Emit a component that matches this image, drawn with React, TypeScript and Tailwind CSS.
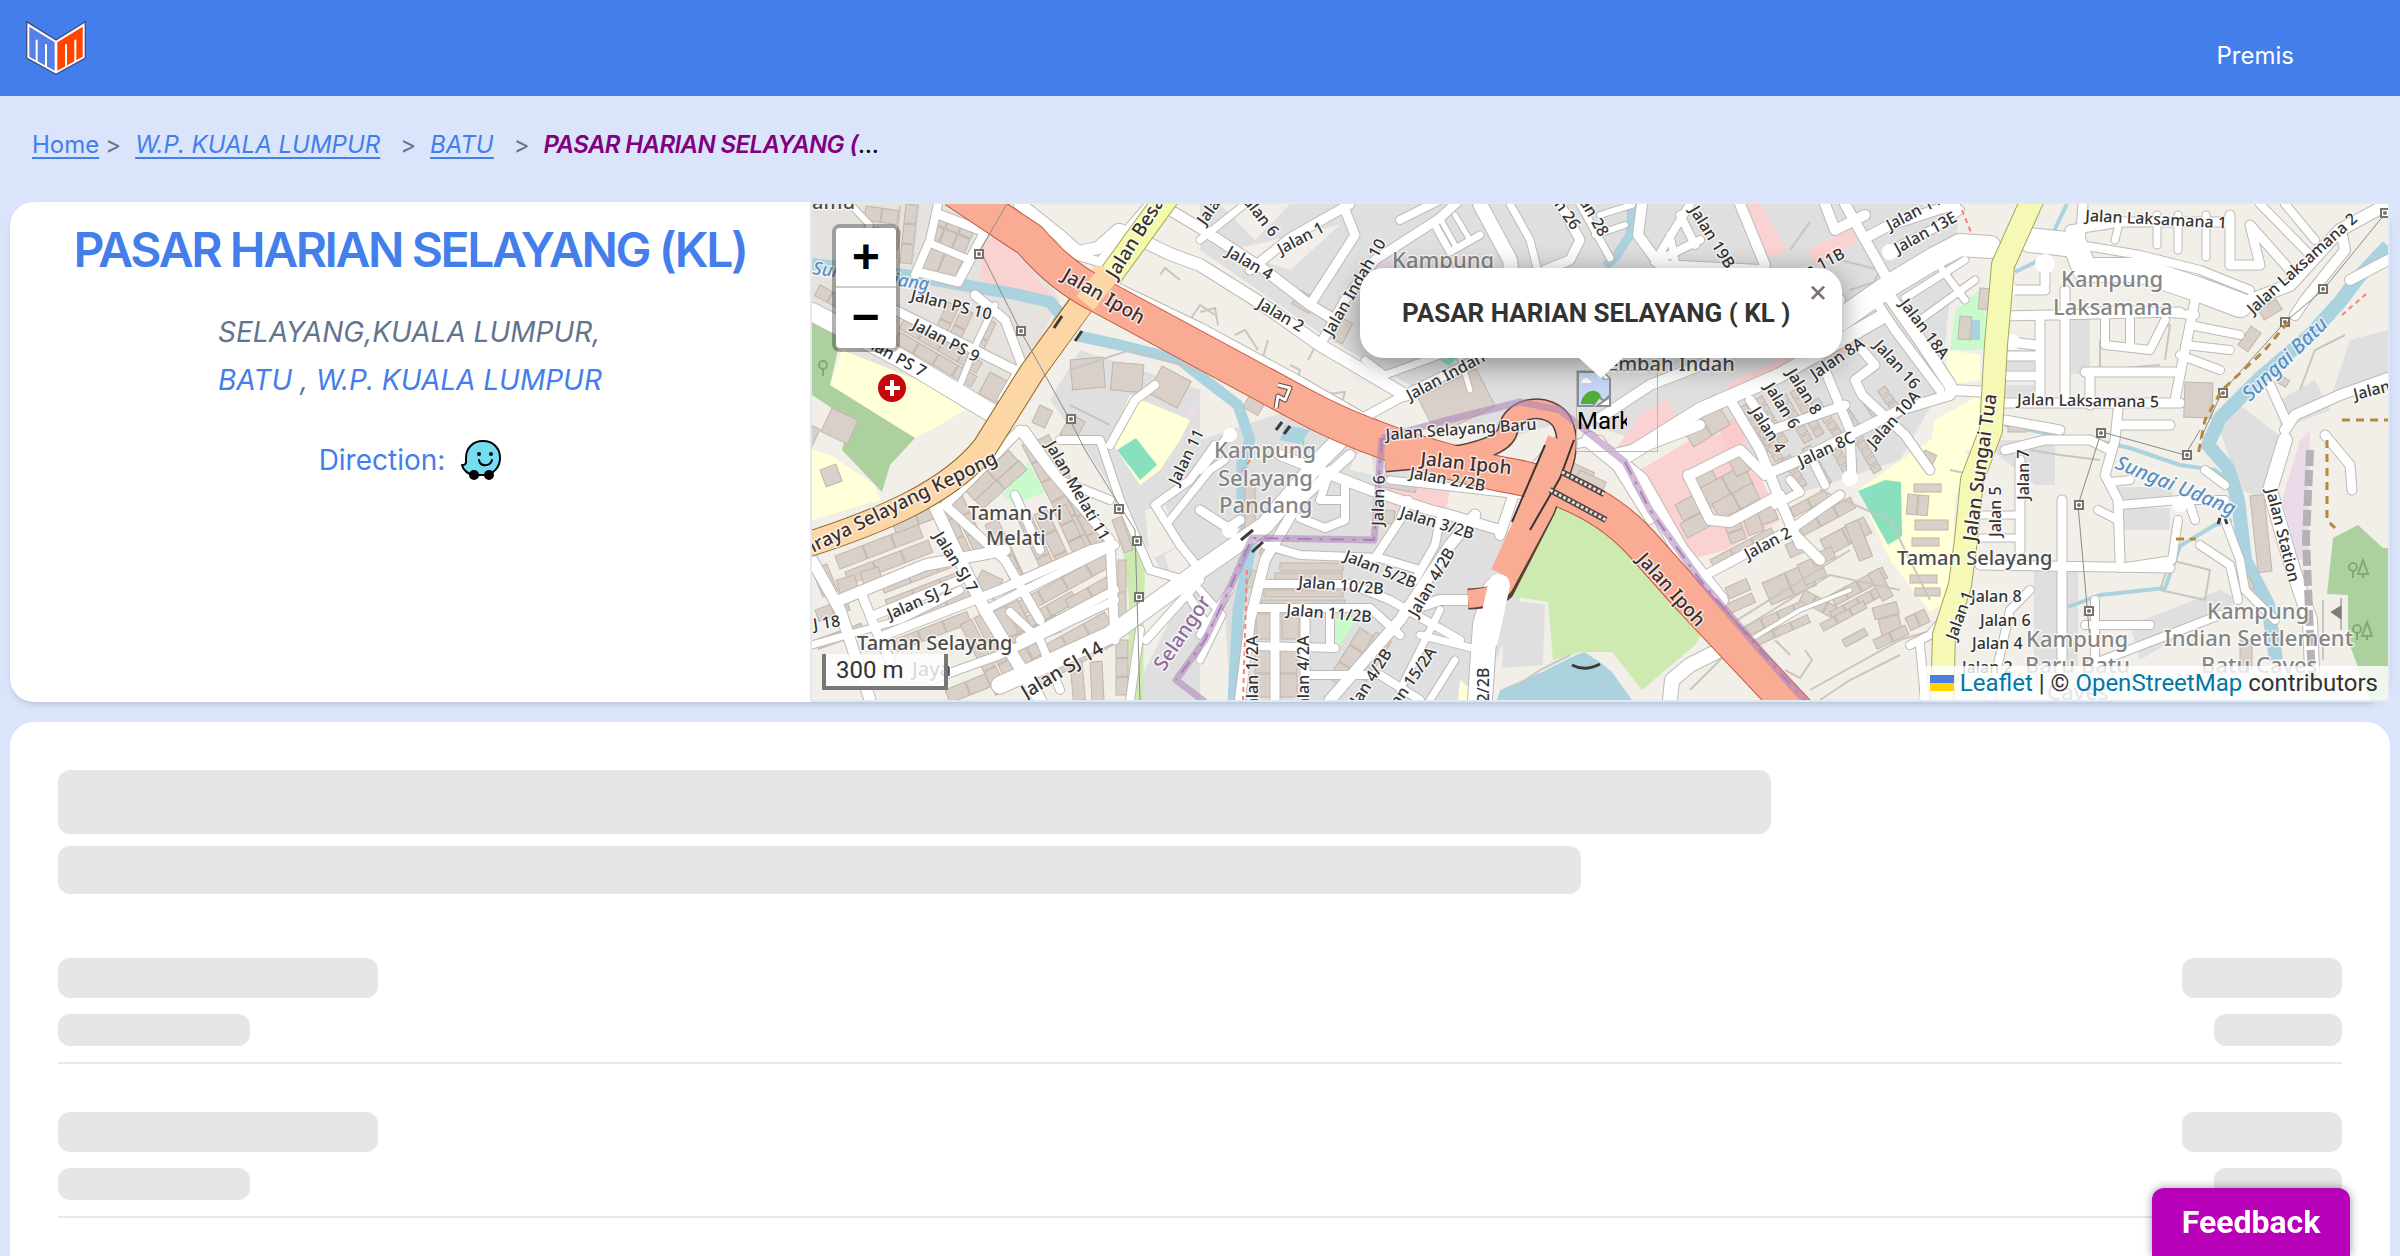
import React from 'react';

type Block = [number, number, number, number, number, number];
type Label = [string, number, number, number];

// x, y, width, height, angle, number of units in the row
const blocks: Block[] = [
  [866, 206, 34, 14, 8, 2], [864, 226, 38, 18, 8, 2], [906, 204, 12, 60, 6, 3],
  [938, 210, 42, 14, 22, 3], [932, 224, 42, 16, 22, 3], [928, 246, 38, 24, 22, 2],
  [820, 285, 30, 12, 28, 2], [905, 318, 90, 12, 30, 4], [900, 332, 90, 12, 30, 4], [895, 346, 80, 12, 30, 3],
  [948, 302, 12, 38, 25, 2], [962, 308, 12, 38, 25, 2], [985, 318, 12, 40, 25, 2], [990, 372, 26, 24, 28, 1],
  [832, 408, 30, 26, 25, 1], [820, 470, 18, 18, -20, 1],
  [1070, 360, 34, 30, -5, 1], [1113, 362, 32, 28, 5, 1], [1162, 366, 34, 30, 28, 1],
  [1040, 405, 14, 20, 25, 1], [1060, 434, 24, 16, -60, 1], [800, 420, 22, 30, 25, 1],
  [835, 556, 90, 14, -21, 3], [845, 572, 90, 13, -21, 3], [892, 522, 50, 12, -21, 2],
  [836, 580, 20, 20, -16, 1], [860, 572, 20, 20, -16, 1],
  [935, 505, 13, 60, -25, 3], [950, 500, 13, 60, -25, 3], [965, 490, 60, 14, -42, 2], [975, 500, 60, 12, -42, 2],
  [985, 525, 14, 66, -25, 3], [1001, 560, 13, 30, -25, 2], [1018, 520, 14, 66, -25, 3], [1034, 515, 14, 70, -25, 3],
  [1022, 445, 16, 130, -27, 6], [1038, 440, 12, 130, -27, 6], [1053, 510, 14, 54, -25, 3],
  [880, 582, 88, 12, -21, 3], [885, 600, 88, 12, -21, 3], [888, 617, 90, 14, -21, 3], [893, 640, 80, 12, -21, 3],
  [982, 570, 24, 22, 25, 1], [1014, 604, 110, 14, -29, 4], [1020, 620, 60, 12, -29, 2], [1065, 600, 52, 12, -29, 2],
  [1018, 660, 100, 14, -29, 4], [1025, 680, 100, 12, -29, 4],
  [960, 625, 13, 80, -27, 3], [974, 618, 13, 80, -27, 3], [993, 612, 13, 62, -27, 2], [1006, 606, 13, 60, -27, 2],
  [812, 570, 16, 30, -22, 1], [815, 610, 34, 12, -20, 2], [815, 640, 50, 10, -20, 2],
  [945, 690, 44, 14, -22, 2], [1070, 662, 12, 40, -5, 1], [1090, 662, 12, 40, -3, 1], [1116, 640, 12, 56, 0, 3],
  [1118, 560, 8, 66, 0, 2], [1112, 520, 10, 36, -20, 1],
  [1280, 563, 64, 8, 0, 1], [1275, 573, 68, 8, 0, 1], [1264, 590, 80, 7, 0, 1], [1262, 600, 84, 6, 0, 1],
  [1256, 614, 17, 26, 0, 1], [1282, 614, 17, 26, 0, 1], [1255, 650, 17, 48, 0, 2], [1280, 650, 17, 48, 0, 2],
  [1360, 628, 18, 60, 32, 3], [1376, 632, 18, 48, 32, 2], [1385, 475, 34, 12, 10, 1], [1385, 510, 10, 14, 5, 1],
  [1264, 545, 10, 10, 30, 1], [1252, 570, 8, 18, 20, 1], [1250, 395, 18, 14, 30, 1], [1245, 480, 10, 50, 0, 2],
  [1418, 398, 66, 42, -27, 1], [1342, 318, 12, 24, 27, 1], [1300, 290, 20, 16, 30, 1],
  [1550, 452, 50, 30, 25, 1], [1580, 470, 30, 26, 25, 1],
  [1675, 505, 30, 18, -28, 1], [1690, 478, 24, 18, -28, 1], [1700, 488, 50, 22, -28, 2], [1712, 504, 46, 18, -28, 2], [1728, 460, 16, 20, -28, 1],
  [1680, 524, 34, 16, -28, 1], [1724, 524, 16, 22, -20, 2], [1742, 516, 16, 22, -20, 1], [1756, 508, 18, 18, -20, 1],
  [1690, 410, 30, 16, -32, 1], [1680, 425, 44, 26, -32, 2], [1710, 560, 70, 12, -28, 3],
  [1790, 508, 40, 10, -28, 2], [1798, 525, 60, 12, -28, 3], [1820, 540, 50, 18, -28, 2], [1845, 525, 14, 40, -22, 1],
  [1762, 583, 50, 24, -24, 2], [1797, 565, 24, 22, -24, 1], [1785, 545, 20, 14, -24, 1], [1810, 556, 24, 12, -24, 1],
  [1725, 588, 24, 12, -24, 1], [1725, 605, 30, 10, -24, 1], [1745, 626, 70, 10, -24, 4], [1755, 638, 58, 8, -24, 3],
  [1805, 590, 40, 12, 28, 3], [1830, 595, 60, 12, -28, 4], [1830, 612, 60, 10, -28, 4], [1868, 574, 12, 32, -28, 1],
  [1820, 624, 50, 8, -28, 3], [1842, 640, 26, 8, -28, 1], [1872, 608, 26, 12, -15, 1], [1878, 620, 22, 22, -15, 1],
  [1873, 640, 36, 10, -25, 2], [1905, 618, 22, 14, -25, 2],
  [1914, 484, 28, 8, 0, 1], [1908, 494, 22, 20, 5, 2], [1915, 520, 34, 10, 0, 1], [1912, 538, 28, 8, 0, 1],
  [1910, 575, 28, 8, 0, 1], [1915, 588, 26, 8, 0, 1], [1925, 450, 14, 14, 25, 1], [1960, 316, 12, 24, 5, 1], [1980, 288, 10, 22, 5, 1],
  [2185, 382, 28, 36, 2, 1], [2258, 310, 22, 12, -32, 1], [2238, 345, 24, 12, -55, 1], [2280, 375, 12, 8, 30, 1],
  [2250, 496, 14, 78, -6, 1], [2008, 426, 20, 6, 0, 1], [2240, 640, 12, 30, 0, 1], [2240, 580, 10, 14, -25, 1],
];

// rows of small detached houses
const houses: [number, number, number, number][] = [
  [1746, 404, 6, 60], [1762, 396, 6, 60], [1786, 394, 6, 60], [1798, 388, 6, 60], [1818, 398, 5, 55],
  [1840, 396, 5, 55], [1866, 392, 5, 55], [1885, 386, 4, 55], [1766, 428, 5, 60], [1790, 455, 4, 60], [1810, 445, 5, 60], [1835, 440, 5, 60], [1860, 432, 5, 60],
];

const greyAreas = [
  'M1200 204H1960L1940 390 1900 460 1780 500 1700 400 1640 440 1570 420 1500 440 1330 350 1200 250Z',
  'M1200 440 1290 410 1400 455 1500 480 1520 600 1480 700H1130L1180 600 1100 470 1050 400 1080 350 1200 390Z',
  'M1980 440H2055V485H2035ZM2034 565H2078V680H2034ZM2118 487H2172V505H2118ZM2118 508H2170V530H2118Z',
  'M1504 600 1545 604 1543 665 1502 668Z', 'M2350 340 2388 330V390L2330 400ZM2280 400 2315 380 2330 410 2280 430ZM2220 430 2240 405 2285 440 2270 500 2240 490Z',
  'M2130 625 2220 590 2240 600 2140 660ZM2071 310H2090V374H2071ZM2005 350H2034V370H2005ZM2005 385H2034V400H2005Z',
];

const beige = [
  'M1200 250 1330 340 1410 385 1405 430 1200 330Z', 'M1230 250 1340 225 1290 270ZM1220 204H1290L1255 240Z',
  'M1450 480 1515 490 1500 530 1445 515Z', 'M1200 610 1225 610 1230 700H1200Z', 'M1145 510 1165 505 1180 545 1150 560Z',
  'M1165 555 1182 545 1190 570 1172 582Z', 'M1960 204H2000V225L1975 235Z', 'M1355 455 1370 450 1375 475 1350 470Z',
  'M1030 215 1140 215 1100 245 1080 245Z', 'M1145 240 1200 275V320L1130 285Z',
];

const roads: [string, number][] = [
  ['M812 312 900 358 990 412', 18], ['M938 204 930 240 915 275', 8], ['M938 214 985 232 958 282 918 272', 9], ['M932 244 970 260', 7],
  ['M895 310 965 345 1015 370', 9], ['M975 295 1005 320 1022 365 1002 400', 9], ['M960 385 978 340 995 305', 6], ['M850 204 870 225 860 250', 6],
  ['M1000 204 1060 250 1100 262 1150 204', 9], ['M1100 280 1200 328 1300 382 1375 425 1390 445', 10],
  ['M1020 204 1060 236 1078 252 1098 248 1118 230', 12], ['M1170 210 1200 228 1262 268 1310 305 1335 320', 10],
  ['M1120 230 1170 254 1200 265 1262 304 1320 345 1405 395', 12], ['M1250 270 1290 238 1350 204', 9], ['M1200 240 1245 204', 7],
  ['M1310 305 1355 235 1345 210', 9], ['M1320 345 1345 300 1375 260 1440 218 1470 190', 9], ['M1400 220 1460 190', 8],
  ['M1435 225 1450 252 1480 235', 7], ['M1440 218 1455 245M1455 215 1470 240', 5], ['M1480 204 1510 260 1520 350', 14], ['M1510 204 1530 240 1540 280', 7],
  ['M1560 204 1580 240 1570 260 1545 270', 9], ['M1580 204 1610 258', 7], ['M1600 215 1632 205M1595 235 1625 225', 6],
  ['M1350 425 1405 395 1480 358', 9], ['M1365 360 1385 375 1440 355', 7], ['M1455 340 1470 390', 5],
  ['M1642 204 1638 235 1660 265 1760 270', 10], ['M1680 215 1695 245M1690 204 1668 240 1655 262 1700 240', 8], ['M1670 235 1675 260', 7],
  ['M1740 204 1765 265', 10], ['M1825 204 1835 230 1865 215M1845 204 1885 275', 10], ['M1865 238 1890 225 1955 204', 10],
  ['M1840 320 1890 285 1935 258 1960 245 1990 247', 22], ['M1888 252 1935 228 1960 210', 8], ['M1905 298 1965 260M1920 320 1975 280M1935 260 1965 300', 7],
  ['M1885 290 1920 340 1950 385', 12], ['M1875 300 1895 330 1940 390', 9], ['M1600 418 1650 385 1740 350 1840 300', 10],
  ['M1620 460 1700 410 1780 375 1880 318', 14], ['M1610 455 1640 448 1700 425', 10],
  ['M1730 400 1760 450 1780 500 1795 535 1820 560', 10], ['M1750 400 1772 430 1845 405', 9], ['M1825 370 1850 430 1852 478', 9],
  ['M1855 380 1862 395 1905 435 1930 470M1855 380 1875 365 1862 350', 9], ['M1690 475 1740 450 1765 475 1800 460 1900 410 1950 395', 10],
  ['M1688 475 1710 520 1730 522 1780 495', 10], ['M1790 480 1800 492 1775 505M1815 465 1825 485', 8], ['M1700 578 1790 530 1840 495', 9],
  ['M1780 500 1800 545', 9], ['M1590 440 1640 480 1680 550 1720 600', 16], ['M1570 445 1600 440 1650 520', 8],
  ['M1670 700 1672 680 1690 665 1720 650 1725 645', 14], ['M1725 655 1800 610 1850 590', 4],
  ['M1950 390 1990 392', 10], ['M1910 645 1930 635 1938 625M1920 645 1925 700', 8],
  ['M812 560 840 610 870 700M835 602 925 565 1005 550', 11], ['M932 500 960 560 985 610 1040 700', 12], ['M862 595 880 640 890 660', 9],
  ['M875 615 960 580M880 637 1000 590 1090 550 1110 545', 9], ['M955 495 1020 430 1050 470 1110 540 1115 640', 9], ['M1000 450 945 505 1005 560 1040 620', 9],
  ['M1040 550 1015 495M985 610 1115 545', 8], ['M1010 612 1040 640 1060 690M1020 640 1115 590', 8], ['M812 645 900 620 960 590', 7],
  ['M930 680 1000 655 1115 600', 8], ['M1000 685 1110 635 1200 570 1265 525 1320 460 1350 430', 17],
  ['M1060 440 1100 440 1120 500 1150 570 1185 580M1025 430 1060 480 1110 500', 8], ['M1215 445 1190 480 1155 505 1180 545 1200 570', 8],
  ['M1110 445 1135 400 1155 385', 8], ['M1170 520 1210 470 1225 460', 7], ['M1140 630 1130 700M1185 590 1210 630M1146 640 1200 580', 8],
  ['M1200 635 1230 590M1200 590 1222 615 1200 660', 7], ['M1200 510 1228 528 1240 520', 9], ['M1200 470 1225 440', 8],
  ['M1280 455 1370 490 1430 510 1450 515 1500 530', 10], ['M1350 455 1300 500 1265 560 1250 620 1240 700', 10], ['M1265 545 1300 555 1380 558 1420 570', 8],
  ['M1375 558 1400 520 1408 500M1415 580 1435 545 1440 520M1330 470 1320 500 1345 500M1345 480 1345 520 1325 528 1300 518', 8],
  ['M1262 584 1350 584 1390 600 1460 640', 8], ['M1256 608 1370 608 1400 635', 8], ['M1275 610 1275 700M1305 612 1305 700', 9],
  ['M1256 646 1335 648M1330 610 1330 645', 8], ['M1330 700 1400 620 1450 545 1475 515', 11], ['M1310 675 1380 675 1420 700', 8],
  ['M1410 610 1440 600 1500 600', 10], ['M1495 590 1485 625 1480 700', 24], ['M1500 535 1515 490 1560 440', 10], ['M1390 480 1520 495', 7],
  ['M1480 650 1420 635M1440 610 1400 690M1455 660 1430 700', 7],
  ['M2030 240 2075 245 2085 270 2140 270 2200 290 2240 305', 24], ['M2083 204 2080 245', 9], ['M2080 245 2140 255 2200 270 2250 290', 8],
  ['M2010 290 2045 290M2045 285 2045 265', 9], ['M2005 316 2180 312M2040 315 2040 400M2065 290 2065 400M2005 356H2034M2005 376H2034M2012 342 2035 345', 9],
  ['M2085 312 2130 310 2195 315M2105 320V345L2150 350 2165 320M2130 320V345', 8], ['M2120 220 2115 240M2157 215V245M2178 215V250M2206 215V257', 7],
  ['M2070 230 2120 222 2230 222M2230 215V265L2260 265 2250 225 2290 270', 9], ['M2260 204 2310 255M2285 204 2315 240', 8],
  ['M2388 204 2340 230 2290 285 2250 300', 12], ['M2342 235 2345 250 2305 300 2295 315', 10], ['M2195 300 2185 350 2175 400', 9],
  ['M2190 325 2240 335M2185 345 2230 350M2180 355 2220 370', 8], ['M2085 372H2175M2090 372V405', 9], ['M2005 403H2180', 9], ['M2005 420 2060 430', 9],
  ['M2005 450 2045 440 2090 440 2110 450M2118 410 2115 440 2105 475 2118 500 2120 560M2120 425H2170', 9],
  ['M2110 482 2130 480M2120 505 2180 500 2225 500M2120 568 2172 560 2178 520M2190 505 2195 520', 8], ['M2062 500V680M2020 460V550M1980 565 2170 568', 9],
  ['M1980 515H2020M1980 538H2020', 7], ['M2098 510 2118 520M2205 470 2225 485', 8],
  ['M2200 545 2230 565 2238 600M2225 520 2240 560 2245 590 2275 620', 8],
  ['M2085 625H2150M2090 665 2220 615M2095 600V660', 8], ['M2285 430 2295 415 2340 395 2388 378', 10], ['M2270 385 2288 425', 9],
  ['M2325 435 2350 465 2352 490', 9], ['M2285 440 2270 490 2290 560 2310 620 2312 670', 14], ['M2350 280 2388 260', 10], ['M1990 700 2010 610 2030 590', 8],
];

const rails = ['M1007 204 980 250 1020 330 1070 420 1085 450', 'M1085 450 1135 530 1140 700', 'M2388 210 2323 290 2285 322 2222 392 2200 440', 'M2102 430 2078 505 2090 640', 'M2102 432 2185 455 2200 430'];

const pylons = [[979, 254], [1021, 331], [1071, 419], [1119, 509], [1137, 541], [1139, 597], [2323, 289], [2285, 322], [2223, 393], [2101, 433], [2187, 455], [2079, 505], [2089, 611], [2385, 213]];

const streetLabels: Label[] = [
  ['Jalan PS 10', 910, 300, 14], ['Jalan PS 9', 911, 328, 28], ['Jalan PS 7', 858, 342, 29], ['Jalan 11', 1178, 486, -64],
  ['Jalan Melati 11', 1045, 445, 60], ['Jalan SJ 7', 933, 536, 58], ['Jalan SJ 2', 890, 620, -24], ['J 18', 814, 630, -8],
  ['Jalan 6', 1240, 198, 52], ['Jalan 1', 1281, 255, -28], ['Jalan 4', 1225, 255, 30], ['Jalan 2', 1256, 307, 30], ['Jalan 9', 1205, 226, -55],
  ['Jalan Indah 10', 1332, 337, -60], ['Jalan Indah', 1410, 401, -28], ['Jalan 26', 1538, 182, 55], ['Jalan 28', 1570, 186, 60],
  ['Jalan Selayang Baru', 1386, 440, -4], ['Jalan 2/2B', 1409, 478, 10], ['Jalan 3/2B', 1399, 517, 17], ['Jalan 5/2B', 1343, 560, 22],
  ['Jalan 10/2B', 1298, 587, 5], ['Jalan 11/2B', 1286, 615, 5], ['Jalan 6', 1383, 526, -88], ['Jalan 4/2B', 1417, 618, -60],
  ['Jalan 1/2A', 1258, 712, -90], ['Jalan 4/2A', 1309, 712, -90], ['Jalan 4/2B', 1352, 718, -58], ['Jalan 15/2A', 1388, 722, -55], ['Jalan 2/2B', 1489, 744, -90],
  ['Jalan 19B', 1689, 210, 58], ['Jalan 11B', 1784, 290, -28], ['Jalan 13E', 1898, 254, -29], ['Jalan 11', 1890, 231, -28], ['Jalan 8A', 1815, 380, -34],
  ['Jalan 18A', 1899, 304, 53], ['Jalan 16', 1873, 346, 48], ['Jalan 8', 1786, 373, 58], ['Jalan 6', 1764, 387, 58], ['Jalan 4', 1750, 411, 58],
  ['Jalan 8C', 1801, 467, -25], ['Jalan 10A', 1874, 449, -48], ['Jalan 2', 1748, 560, -28],
  ['Jalan Laksamana 1', 2085, 221, 3], ['Jalan Laksamana 5', 2017, 405, 1], ['Jalan Laksamana 2', 2253, 315, -42], ['Jalan', 2355, 400, -14],
  ['Jalan 7', 2029, 500, -90], ['Jalan 5', 2001, 537, -90], ['Jalan 8', 1971, 602, 0], ['Jalan 6', 1980, 626, 0], ['Jalan 4', 1972, 649, 0], ['Jalan 1', 1956, 641, -70],
  ['Jalan Station', 2266, 490, 76], ['Jalan 2', 1962, 673, 0],
];

const bigLabels: Label[] = [
  ['Jalan Ipoh', 1061, 279, 30], ['Jalan Besar', 1116, 280, -58], ['Jalan Ipoh', 1420, 465, 6], ['Jalan Ipoh', 1636, 560, 48],
  ['Jalanraya Selayang Kepong', 778, 570, -26], ['Jalan Sungai Tua', 1976, 542, -82], ['Jalan SJ 14', 1026, 699, -31],
];

const placeLabels: Label[] = [
  ['Taman Sri', 968, 520, 0], ['Melati', 986, 545, 0], ['Taman Selayang', 857, 650, 0], ['Jaya', 912, 676, 0],
  ['Lembah Indah', 1596, 371, 0], ['Taman Selayang', 1897, 565, 0], ['amu', 812, 209, 0],
];

const kampungLabels: Label[] = [
  ['Kampung', 1392, 268, 0], ['Kampung', 1214, 458, 0], ['Selayang', 1218, 486, 0], ['Pandang', 1219, 513, 0],
  ['Kampung', 2061, 287, 0], ['Laksamana', 2053, 315, 0], ['Kampung', 2026, 647, 0], ['Baru Batu', 2025, 673, 0], ['Caves', 2047, 700, 0],
  ['Kampung', 2207, 619, 0], ['Indian Settlement', 2164, 646, 0], ['Batu Caves', 2201, 673, 0],
];

const Labels: React.FC<{ items: Label[]; size: number; fill: string; italic?: boolean }> = ({ items, size, fill, italic }) => (
  <g fontSize={size} fill={fill} stroke="#ffffff" strokeOpacity="0.7" strokeWidth="3" strokeLinejoin="round" paintOrder="stroke" fontStyle={italic ? 'italic' : 'normal'}>
    {items.map(([text, x, y, angle], i) => (
      <text key={i} transform={`translate(${x} ${y}) rotate(${angle})`}>{text}</text>
    ))}
  </g>
);

const MapTiles: React.FC = () => (
  <svg viewBox="812 204 1576 496" preserveAspectRatio="xMidYMid slice" className="block size-full font-['Noto_Sans',sans-serif] font-medium" aria-label="Street map">
    <rect x="400" y="100" width="2400" height="700" fill="#f2efe9" />
    <path d="M812 204H1000L1060 300 1000 420 812 340Z" fill="#e6e2dd" />
    <g fill="#e0dfdf">{greyAreas.map((d, i) => <path key={i} d={d} />)}</g>
    <g fill="#f2efe9">{beige.map((d, i) => <path key={i} d={d} />)}</g>

    {/* retail and industrial */}
    <path d="M985 240 1000 235 1055 300 980 280Z M1385 485 1450 490 1445 515 1385 505Z M1740 204 1760 204 1788 252 1768 257Z M1808 250 1850 228 1860 240 1815 265Z M1640 415 1668 398 1680 430 1615 450Z M1640 470 1690 440 1740 430 1780 520 1725 550 1690 560Z M1725 385 1800 350 1810 365 1735 395Z" fill="#fbd2d2" />
    <path d="M1720 430 1738 414 1745 440 1728 462Z M1820 340 1870 315 1845 355Z" fill="#fbcaca" />
    <path d="M2300 440 2310 430 2308 560 2298 560 2282 500Z M1188 408 1198 402 1196 415 1184 422Z M1378 255 1398 245 1392 268 1375 270Z" fill="#ebdbe8" />

    {/* schools and hospital */}
    <path d="M842 350 930 385 965 410 940 425 915 438 830 385Z M812 450 830 455 875 485 880 500 812 520Z M1130 395 1190 420 1180 440 1160 470 1140 485 1110 440Z" fill="#ffffd8" />
    <path d="M1858 490 1945 430 1968 455 1955 500 1950 600 1930 612 1890 560Z M1948 350 1980 355 1980 380 1945 385Z M1935 420 1980 395 1978 450 1930 450Z M1460 680 1472 690 1470 700H1458Z" fill="#ffffd8" />

    {/* woods, parks and pitches */}
    <path d="M812 317 842 332 830 385 915 438 890 465 882 492 842 450 850 420 812 395Z M1030 625 1056 612 1062 632 1038 641Z M2333 538 2358 525 2383 548 2388 548V700H2370L2348 640V595L2327 594Z" fill="#add19e" />
    <path d="M1545 508 1580 505 1620 545 1704 630 1695 645 1642 690 1612 652 1580 652 1553 660 1548 602 1510 596Z M1120 525 1134 520 1145 560 1143 700H1128L1129 600Z" fill="#cdebb0" />
    <path d="M1003 495 1028 462 1045 492 1015 505Z M1055 612 1064 608 1070 625 1060 630Z M1334 618 1358 618 1340 645H1333Z M1955 310 1970 298 1985 285 1985 350H1950Z" fill="#c8facc" />
    <path d="M1858 491 1885 480 1901 482 1902 536 1888 545Z M1117 450 1136 438 1157 465 1140 480Z M1440 360 1458 355 1450 366Z M1298 438 1305 435 1304 446Z" fill="#88e0be" />

    {/* water */}
    <path d="M1497 700 1500 690 1542 672 1576 655 1584 652 1600 662 1612 672 1632 700Z M1972 320 1980 320 1980 340 1970 340Z M1285 425 1310 430 1300 444 1280 440Z" fill="#aad3df" />
    <g fill="none" stroke="#aad3df" strokeLinejoin="round">
      <path d="M812 264 905 275 1010 293 1050 302 1061 315 1057 326" strokeWidth="12" />
      <path d="M1078 336 1120 345 1180 360 1208 382 1238 405 1250 440 1242 460V520L1252 542 1238 610 1233 700" strokeWidth="11" />
      <path d="M2388 246 2358 278 2340 302 2310 335 2260 378 2220 418 2208 445 2228 468 2238 500 2245 560 2268 605 2276 660" strokeWidth="14" />
      <path d="M1632 204 1630 235 1615 258 1605 266" strokeWidth="9" />
      <path d="M2068 607 2100 595 2165 588 2175 560 2180 546 2215 525 2232 520M2085 438 2130 448 2180 465 2215 470 2228 480M2067 204 2040 260 2015 272M2005 425 2080 440" strokeWidth="4" />
    </g>

    <g fill="#d9d0c9" stroke="#c2b5aa">
      {blocks.map(([x, y, w, h, angle, n], i) => (
        <g key={i} transform={`rotate(${angle} ${x} ${y})`}>
          {Array.from({ length: n }, (_, k) =>
            w >= h
              ? <rect key={k} x={x + (k * w) / n} y={y} width={w / n - 1} height={h} />
              : <rect key={k} x={x} y={y + (k * h) / n} width={w} height={h / n - 1} />
          )}
        </g>
      ))}
      {houses.map(([x, y, n, angle], i) => (
        <g key={i} transform={`rotate(${angle} ${x} ${y})`}>
          {Array.from({ length: n }, (_, k) => <rect key={k} x={x + k * 9} y={y} width="7" height="9" />)}
        </g>
      ))}
    </g>

    {/* footpaths and service roads */}
    <g fill="none" stroke="#c9c6c2" strokeWidth="2">
      <path d="M1200 312 1215 308 1218 325M1235 335 1245 330 1258 350M1268 340 1262 360M1308 360 1316 345 1338 355M1105 278 1110 270 1122 276M1160 275 1165 268 1180 280M1190 320 1200 305 1215 315M1290 365 1300 370 1296 385M1320 395 1345 392 1340 410" />
      <path d="M1775 640 1790 655M1785 670 1800 678 1812 660 1805 650M1810 690 1900 640 1950 625M1820 700 1850 680 1900 655M1705 640 1850 550M1740 630 1830 575 1900 590M1690 690 1720 660 1740 640" />
      <path d="M1790 250 1810 222 1800 235M1840 260 1880 270 1870 290M1850 290 1880 280M2100 340 2100 370 2160 365M2155 330 2170 325 2165 360M2300 390 2315 350 2345 335M1510 690 1540 670 1570 655M1070 370 1130 350 1200 370M1070 405 1110 425M900 206 895 260M918 204 912 260" />
      <path d="M2160 590 2170 560 2210 570 2205 600ZM2030 450 2060 455 2100 460M2323 600V660M1950 470 1975 475M1820 490 1890 520 1930 600" />
    </g>

    <g fill="none" stroke="#bdbab6" strokeLinejoin="round" strokeLinecap="round">
      {roads.map(([d, w], i) => <path key={i} d={d} strokeWidth={w + 2} />)}
    </g>
    <g fill="none" stroke="#ffffff" strokeLinejoin="round" strokeLinecap="round">
      {roads.map(([d, w], i) => <path key={i} d={d} strokeWidth={w} />)}
    </g>
    <g fill="#ffffff">
      <circle cx="1230" cy="435" r="7" /><circle cx="1230" cy="530" r="8" /><circle cx="2045" cy="264" r="10" /><circle cx="2012" cy="342" r="8" />
      <circle cx="1890" cy="252" r="8" /><circle cx="1850" cy="478" r="8" /><circle cx="2180" cy="504" r="8" /><circle cx="2010" cy="290" r="7" />
    </g>

    {/* main roads */}
    <g fill="none" strokeLinejoin="round">
      <path d="M1168 196 1110 276" stroke="#a3a65c" strokeWidth="25" />
      <path d="M1168 196 1110 276" stroke="#f5f9a8" strokeWidth="23" />
      <path d="M2034 196 2003 265 1996 345 1991 430 1972 480 1966 540 1960 585 1944 635 1942 705" stroke="#a3a65c" strokeWidth="24" />
      <path d="M2034 196 2003 265 1996 345 1991 430 1972 480 1966 540 1960 585 1944 635 1942 705" stroke="#f5f9b4" strokeWidth="22" />
      <path d="M800 547C880 522 950 492 985 447L1032 372 1095 285" stroke="#8f6b2f" strokeWidth="26" />
      <path d="M800 547C880 522 950 492 985 447L1032 372 1105 272" stroke="#fcd6a4" strokeWidth="24" />
      <path d="M955 190 1030 240Q1060 276 1100 296L1200 350 1300 404Q1380 448 1500 474 1590 488 1640 542L1690 598 1800 715" stroke="#c8553b" strokeWidth="36" />
      <path d="M1385 462 1460 455Q1505 446 1508 430C1512 405 1550 402 1562 422 1576 450 1556 480 1545 510L1504 590Q1496 598 1468 599" stroke="#5a4038" strokeWidth="21" />
      <path d="M1385 462 1460 455Q1505 446 1508 430C1512 405 1550 402 1562 422 1576 450 1556 480 1545 510L1504 586Q1496 597 1468 599" stroke="#f9ab94" strokeWidth="18" />
      <path d="M955 190 1030 240Q1060 276 1100 296L1200 350 1300 404Q1380 448 1500 474 1590 488 1640 542L1690 598 1800 715" stroke="#f9ab94" strokeWidth="34" />
      <path d="M1561 440 1542 492 1504 575" stroke="#f9ab94" strokeWidth="28" />
      <path d="M1512 522 1545 445M1530 530 1560 478 1574 440" stroke="#3f332e" strokeWidth="2" />
      <path d="M1110 272 1085 303" stroke="#fcd6a4" strokeWidth="22" />
      <path d="M1499 585 1487 640" stroke="#ffffff" strokeWidth="22" strokeLinecap="round" />
      <path d="M1562 472 1604 494M1550 490 1606 520" stroke="#4f4844" strokeWidth="6" />
      <path d="M1562 472 1604 494M1550 490 1606 520" stroke="#e8e0da" strokeWidth="3" strokeDasharray="3 2" />
      <path d="M1054 328 1062 316M1075 341 1082 331M1241 540 1253 530M1252 552 1263 542M1276 430 1282 422M1284 434 1290 426M2218 524 2220 518M2227 524 2225 518M1572 665Q1585 672 1600 664" stroke="#403a36" strokeWidth="3" />
      <path d="M1278 385 1290 388 1285 400 1278 396 1276 408" stroke="#604840" strokeWidth="5" />
      <path d="M1278 385 1290 388 1285 400 1278 396 1276 408" stroke="#ffffff" strokeWidth="3" />
    </g>

    {/* state boundary */}
    <g fill="none" stroke="#a981b8" strokeLinejoin="round">
      <path d="M1382 438 1374 540 1252 538 1228 592 1205 640 1176 680 1205 702" strokeWidth="7" strokeOpacity="0.55" />
      <path d="M1382 438 1440 422 1520 402 1560 410 1625 462 1650 510 1700 580 1760 650 1806 702" strokeWidth="7" strokeOpacity="0.55" />
      <path d="M1382 438 1374 540 1252 538 1228 592 1205 640 1176 680M1625 462 1650 510 1700 580 1760 650 1806 702" strokeWidth="2" strokeDasharray="14 8 3 8" />
    </g>

    {/* power lines, railway and tracks */}
    <g fill="none" stroke="#8c8a88">{rails.map((d, i) => <path key={i} d={d} />)}</g>
    <g fill="#ffffff" stroke="#77726e" strokeWidth="2">
      {pylons.map(([x, y], i) => <g key={i}><rect x={x - 4} y={y - 4} width="8" height="8" /><circle cx={x} cy={y} r="1" /></g>)}
    </g>
    <path d="M2310 450 2306 540 2312 680" fill="none" stroke="#b5b2b5" strokeWidth="8" strokeDasharray="16 4" />
    <path d="M2288 322 2265 350 2222 390 2205 420 2198 455M2327 440V520L2335 528M2342 420H2388M2176 539H2196" fill="none" stroke="#b58a3c" strokeWidth="3" strokeDasharray="8 6" />
    <path d="M2342 315 2366 294M1247 570 1243 700M1962 210 1972 235M1250 460 1240 475" fill="none" stroke="#fa8072" strokeWidth="2" strokeDasharray="5 4" />
    <g fill="none" stroke="#7fa975" strokeWidth="2">
      <circle cx="2353" cy="567" r="4" /><path d="M2353 571V578M2363 560 2358 574H2368ZM2363 574V578" />
      <circle cx="2357" cy="629" r="4" /><path d="M2357 633V640M2367 622 2362 636H2372ZM2367 636V640" />
      <circle cx="823" cy="365" r="4" /><path d="M823 369V376" />
    </g>
    <path d="M2331 612 2341 606V619ZM2341 598V630" fill="#7d7d7d" stroke="#7d7d7d" />
    <circle cx="892" cy="388" r="14" fill="#c4080e" />
    <path d="M885 388H900M892 380V396" stroke="#ffffff" strokeWidth="4" />

    <Labels items={kampungLabels} size={22} fill="#858585" />
    <Labels items={placeLabels} size={20} fill="#4c4c4c" />
    <Labels items={streetLabels} size={16} fill="#333333" />
    <Labels items={bigLabels} size={19} fill="#3a3030" />
    <Labels items={[['Sungai Batu', 2250, 402, -44], ['Sungai Udang', 2114, 468, 22]]} size={20} fill="#5b8fc4" italic />
    <Labels items={[['Sungai Jinjang', 812, 274, 8]]} size={18} fill="#5b8fc4" italic />
    <Labels items={[['Selangor', 1164, 672, -56]]} size={20} fill="#8d6b9c" />
  </svg>
);

const Logo: React.FC = () => (
  <svg viewBox="49 28 180 164" className="h-14 w-[60px]" aria-hidden="true">
    <path d="M51 31 139 86 227 31V140L139 189 51 140Z" fill="#ffffff" stroke="#3d4f80" strokeWidth="4" />
    <path d="M59 46 135 93V178L59 136Z" fill="#5581e6" />
    <path d="M219 46 143 93V178L219 136Z" fill="#ff4500" />
    <path d="M81 85V152M109 99V166M169 99V166M197 85V152" stroke="#ffffff" strokeWidth="6" />
  </svg>
);

const WazeIcon: React.FC = () => (
  <svg viewBox="0 0 40 40" className="size-10" aria-hidden="true">
    <path d="M22 1C12 1 5 8 5 18V22C5 25 3 25 1 25C2 30 7 35 15 35H25C34 33 39 26 39 18C39 8 32 1 22 1Z" fill="#76dcf2" stroke="#000000" strokeWidth="2" strokeLinejoin="round" />
    <circle cx="13" cy="35" r="5" /><circle cx="28" cy="35" r="5" />
    <circle cx="18" cy="14" r="2" /><circle cx="30" cy="14" r="2" />
    <path d="M18 20C19 27 29 27 31 20" fill="none" stroke="#000000" strokeWidth="2" strokeLinecap="round" />
  </svg>
);

const BrokenImage: React.FC = () => (
  <svg viewBox="0 0 34 36" className="h-9 w-[34px]" aria-hidden="true">
    <path d="M1 1H26L33 8V24L27 30 22 26 16 35H1Z" fill="#c7d7f5" stroke="#8a8f96" strokeWidth="2" />
    <path d="M4 31C8 17 22 17 24 26L17 33H4Z" fill="#4fae33" />
    <path d="M4 12C5 7 10 6 12 9C15 9 15 12 14 12Z" fill="#ffffff" />
    <path d="M26 1V8H33Z" fill="#ffffff" stroke="#8a8f96" />
    <path d="M20 35 27 30 33 26V35Z" fill="#ffffff" stroke="#8a8f96" strokeWidth="2" />
  </svg>
);

const Skeleton: React.FC<{ className: string }> = ({ className }) => <div className={`rounded-xl bg-[#e5e6e8] ${className}`}></div>;

const App: React.FC = () => {
  const rows = [1, 2, 3];

  return (
    <div className="h-screen overflow-hidden bg-[#dae5fb] font-['Inter',sans-serif] text-2xl">
      <header className="flex h-24 items-center justify-between bg-[#437eeb] pl-[26px] pr-[106px] text-white">
        <a href="#" aria-label="Home page"><Logo /></a>
        <a href="#" className="pt-4">Premis</a>
      </header>

      <nav aria-label="Breadcrumb" className="flex h-[106px] items-center px-8 pb-2 text-slate-500">
        <a href="#" className="text-[#437eeb] underline underline-offset-4">Home</a>
        <span className="ml-1.5 mr-3.5">&gt;</span>
        <a href="#" className="italic text-[#437eeb] underline underline-offset-4">W.P. KUALA LUMPUR</a>
        <span className="ml-5 mr-3.5">&gt;</span>
        <a href="#" className="italic text-[#437eeb] underline underline-offset-4">BATU</a>
        <span className="ml-5 mr-3.5">&gt;</span>
        <p className="w-[340px] truncate text-black"><span className="font-semibold italic tracking-tight text-[#800080]">PASAR HARIAN SELAYANG (KL)</span></p>
      </nav>

      <main className="px-[10px]">
        <section className="grid grid-cols-[800fr_1580fr] rounded-3xl bg-white shadow-md">
          <div className="flex flex-col items-center pt-5">
            <h1 className="text-5xl font-semibold leading-14 tracking-tighter text-[#437eeb]">PASAR HARIAN SELAYANG (KL)</h1>
            <address className="mt-[30px] text-[28px] leading-12 text-slate-500">
              <p>SELAYANG,KUALA LUMPUR,</p>
              <p><a href="#" className="text-[#437eeb]">BATU</a> , <a href="#" className="text-[#437eeb]">W.P. KUALA LUMPUR</a></p>
            </address>
            <a href="#" className="mt-8 flex items-center gap-4 text-[28px] leading-12 text-[#437eeb]">Direction: <WazeIcon /></a>
          </div>

          <div className="relative h-[500px] overflow-hidden border-2 border-slate-200 font-['Roboto',sans-serif]">
            <MapTiles />

            <div className="absolute left-5 top-5 flex flex-col rounded-lg border-4 border-black/30 bg-clip-padding font-['Liberation_Mono',monospace] text-5xl font-bold text-black">
              <button type="button" aria-label="Zoom in" className="h-[60px] w-[60px] rounded-t border-b-2 border-[#cccccc] bg-white leading-[64px]">+</button>
              <button type="button" aria-label="Zoom out" className="h-[60px] w-[60px] rounded-b bg-white leading-[64px]">−</button>
            </div>

            <div className="absolute left-[764px] top-[166px] size-[82px] border border-[#b8b8b8] text-black">
              <BrokenImage />
              <p className="w-[50px] overflow-hidden leading-7">Marker</p>
            </div>

            <div className="absolute left-[548px] top-16 flex w-[482px] flex-col items-center">
              <div className="flex h-[90px] w-full items-center rounded-3xl bg-white px-[42px] text-[26px] font-bold text-[#333333] shadow-[0_6px_28px_rgba(0,0,0,0.4)]">
                <p className="whitespace-nowrap">PASAR HARIAN SELAYANG ( KL )</p>
              </div>
              <div className="size-0 border-x-[22px] border-t-[20px] border-x-transparent border-t-white"></div>
              <button type="button" aria-label="Close popup" className="absolute right-0 top-0 size-12 text-[32px] leading-12 text-[#757575]">×</button>
            </div>

            <div className="absolute bottom-[10px] left-[10px] h-9 w-[126px] border-4 border-t-0 border-[#777777] bg-white/80 px-[10px] leading-8 text-[#333333]">300 m</div>

            <div className="absolute bottom-0 right-0 flex h-[34px] items-center gap-[6px] bg-white/80 px-[10px] text-[#333333]">
              <svg viewBox="0 0 24 16" className="h-4 w-6" aria-hidden="true"><path fill="#4c7be1" d="M0 0h24v8H0z" /><path fill="#ffd500" d="M0 8h24v8H0z" /></svg>
              <a href="#" className="text-[#0078a8]">Leaflet</a>
              <span>|</span>
              <span>© <a href="#" className="text-[#0078a8]">OpenStreetMap</a> contributors</span>
            </div>
          </div>
        </section>

        <section className="mt-5 rounded-3xl bg-white p-12">
          <Skeleton className="h-16 w-3/4" />
          <Skeleton className="mt-3 h-12 w-2/3" />
          <div className="mt-4">
            {rows.map((row) => (
              <div key={row} className="flex justify-between border-b-2 border-slate-200 pb-4 pt-12">
                <div className="flex flex-col gap-4">
                  <Skeleton className="h-10 w-80" />
                  <Skeleton className="h-8 w-48" />
                </div>
                <div className="flex flex-col items-end gap-4">
                  <Skeleton className="h-10 w-40" />
                  <Skeleton className="h-8 w-32" />
                </div>
              </div>
            ))}
          </div>
        </section>
      </main>

      <button type="button" className="fixed bottom-0 right-[50px] h-[68px] w-[198px] rounded-t-xl bg-[#b900b9] font-['Roboto',sans-serif] text-[32px] font-bold text-white shadow-[0_0_10px_rgba(0,0,0,0.4)]">Feedback</button>
    </div>
  );
};

export default App;
